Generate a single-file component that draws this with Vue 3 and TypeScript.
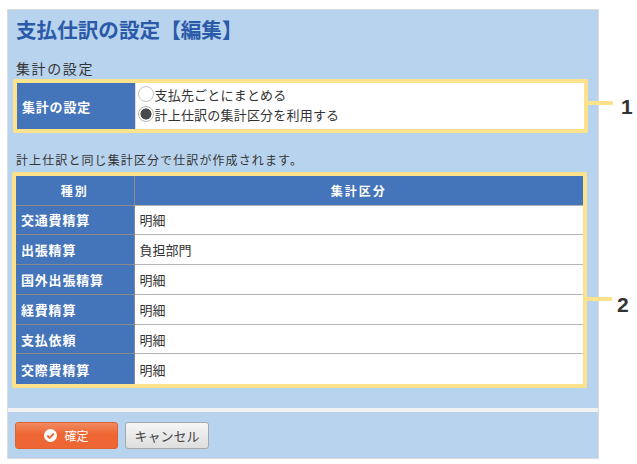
<script setup lang="ts">
const rows: [string, string][] = [
  ['交通費精算', '明細'],
  ['出張精算', '負担部門'],
  ['国外出張精算', '明細'],
  ['経費精算', '明細'],
  ['支払依頼', '明細'],
  ['交際費精算', '明細'],
]
</script>

<template>
  <div class="page">
    <div class="panel">
      <div class="content">
        <h1 class="title">支払仕訳の設定【編集】</h1>
        <h2 class="section">集計の設定</h2>
        <div class="callout callout-one">
          <table class="grid">
            <tbody>
              <tr class="tall">
                <th class="label first">集計の設定</th>
                <td class="options">
                  <label class="opt"><span class="radio"></span>支払先ごとにまとめる</label>
                  <label class="opt"><span class="radio on"></span>計上仕訳の集計区分を利用する</label>
                </td>
              </tr>
            </tbody>
          </table>
          <span class="leader"></span>
          <span class="num">1</span>
        </div>
        <p class="note">計上仕訳と同じ集計区分で仕訳が作成されます。</p>
        <div class="callout callout-two">
          <table class="grid">
            <thead>
              <tr>
                <th class="head first">種別</th>
                <th class="head">集計区分</th>
              </tr>
            </thead>
            <tbody>
              <tr v-for="r in rows" :key="r[0]">
                <th class="label first">{{ r[0] }}</th>
                <td class="cell">{{ r[1] }}</td>
              </tr>
            </tbody>
          </table>
          <span class="leader"></span>
          <span class="num">2</span>
        </div>
      </div>
      <div class="footer">
        <button class="btn ok" type="button">
          <svg class="check" viewBox="0 0 12 12" width="13" height="13">
            <circle cx="6" cy="6" r="6" fill="#fff" />
            <path d="M3 6l2.2 2.2L9 4.2" fill="none" stroke="#ee6633" stroke-width="1.8" />
          </svg>
          確定
        </button>
        <button class="btn cancel" type="button">キャンセル</button>
      </div>
    </div>
  </div>
</template>

<style scoped>
.page {
  width: 637px;
  height: 464px;
  padding: 9px 0 0 7px;
  box-sizing: border-box;
  font-family: "Liberation Sans", "Noto Sans CJK JP", sans-serif;
  color: #333;
  overflow: hidden;
}
.panel {
  width: 592px;
  height: 450px;
  box-sizing: border-box;
  background: #b8d3ee;
  border: 1px solid #dcdcdc;
  display: flex;
  flex-direction: column;
}
.content {
  flex: 1;
  padding: 0 0 0 4px;
}
.title {
  margin: 9px 0 0 4px;
  font-size: 20.6px;
  line-height: 24px;
  font-weight: bold;
  color: #2a5aa8;
}
.section {
  margin: 17px 0 0 4px;
  font-size: 14px;
  line-height: 18px;
  font-weight: normal;
  color: #333;
  letter-spacing: 1.6px;
}
.callout {
  position: relative;
  width: 575px;
  box-sizing: border-box;
  border: 4px solid #fde28c;
  border-radius: 2px;
}
.callout-one {
  margin: 1px 0 0 1px;
  height: 54px;
}
.callout-two {
  margin: 2px 0 0 0;
  height: 216px;
}
.grid {
  width: 100%;
  border-collapse: collapse;
  table-layout: fixed;
  background: #fff;
}
.first {
  width: 118px;
}
.tall {
  height: 46px;
}
.label,
.head {
  background: #4474b9;
  color: #fff;
  font-size: 13px;
  font-weight: bold;
  box-sizing: border-box;
}
.label {
  text-align: left;
  padding: 0 0 0 5px;
  letter-spacing: 0.8px;
  height: 29.8px;
  border-top: 1px solid #8a8a8a;
  border-right: 1px solid #8a8a8a;
}
.head {
  text-align: center;
  height: 29px;
  font-size: 12px;
  letter-spacing: 2px;
  border-right: 1px solid #8a8a8a;
}
.head:last-child {
  border-right: 0;
}
.tall .label {
  border: 0;
  border-right: 1px solid #ddd;
}
.cell {
  box-sizing: border-box;
  font-size: 13px;
  padding: 0 0 0 5px;
  height: 29.8px;
  border-top: 1px solid #b5b5b5;
  color: #333;
}
.options {
  padding: 1px 0 0 2px;
  vertical-align: top;
}
.opt {
  display: flex;
  align-items: center;
  height: 20px;
  font-size: 13px;
  letter-spacing: 0.2px;
  color: #333;
}
.radio {
  width: 16px;
  height: 16px;
  margin-right: 1px;
  box-sizing: border-box;
  border-radius: 50%;
  border: 1.5px solid #c4c4c4;
  background: #fff;
  flex: none;
}
.radio.on {
  background: radial-gradient(circle, #4a4a4a 0 5.3px, #fff 5.8px);
  border-color: #b5b5b5;
}
.leader {
  position: absolute;
  left: 100%;
  margin-left: 4px;
  top: 18px;
  width: 25px;
  height: 4px;
  background: #fde28c;
}
.num {
  position: absolute;
  left: 100%;
  margin-left: 37px;
  top: 12px;
  font-size: 21px;
  line-height: 24px;
  font-weight: bold;
  color: #333;
}
.callout-two .leader {
  top: 121px;
}
.callout-two .num {
  top: 117px;
  margin-left: 34px;
}
.note {
  margin: 19px 0 0 4px;
  font-size: 12px;
  line-height: 18px;
  letter-spacing: 1.1px;
  color: #333;
}
.footer {
  border-top: 4px solid #f2f2f2;
  height: 50px;
  box-sizing: border-box;
  padding: 10px 0 0 7px;
  display: flex;
  align-items: flex-start;
  gap: 7px;
}
.btn {
  height: 27px;
  border-radius: 3px;
  font-family: inherit;
  font-size: 12px;
  padding: 0;
  display: flex;
  align-items: center;
  justify-content: center;
}
.ok {
  width: 103px;
  gap: 7px;
  color: #fff;
  border: 1px solid #e2622f;
  background: linear-gradient(#f08a62, #ee6633 45%, #ee6633);
}
.cancel {
  width: 84px;
  font-size: 13px;
  color: #444;
  border: 1px solid #a8a8a8;
  background: linear-gradient(#f6f6f6, #dedede);
}
</style>
